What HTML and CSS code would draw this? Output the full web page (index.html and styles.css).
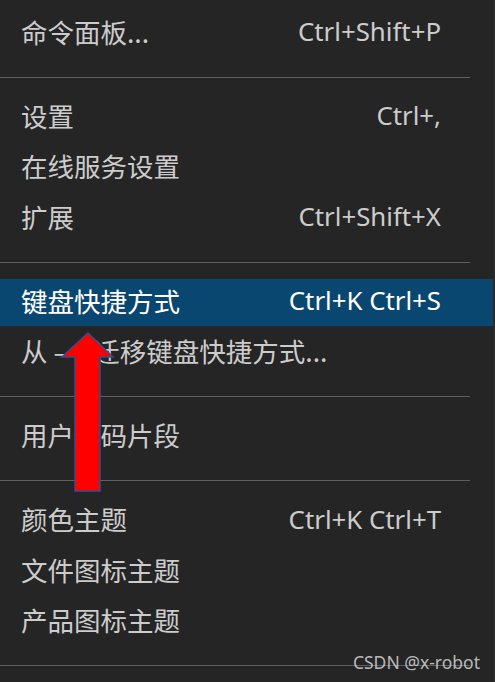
FILE: index.html
```html
<!DOCTYPE html>
<html lang="zh-CN">
<head>
<meta charset="utf-8">
<link rel="stylesheet" href="styles.css">
</head>
<body>
<div class="menu">
  <div class="group">
    <div class="item"><span class="label">命令面板...</span><span class="key">Ctrl+Shift+P</span></div>
  </div>
  <div class="sep"></div>
  <div class="group">
    <div class="item"><span class="label">设置</span><span class="key">Ctrl+,</span></div>
    <div class="item"><span class="label">在线服务设置</span></div>
    <div class="item"><span class="label">扩展</span><span class="key">Ctrl+Shift+X</span></div>
  </div>
  <div class="sep"></div>
  <div class="group">
    <div class="item active"><span class="label">键盘快捷方式</span><span class="key">Ctrl+K Ctrl+S</span></div>
    <div class="item"><span class="label">从 <span class="hidden-part">—</span> 迁移键盘快捷方式...</span></div>
  </div>
  <div class="sep"></div>
  <div class="group">
    <div class="item"><span class="label">用户代码片段</span></div>
  </div>
  <div class="sep"></div>
  <div class="group">
    <div class="item"><span class="label">颜色主题</span><span class="key">Ctrl+K Ctrl+T</span></div>
    <div class="item"><span class="label">文件图标主题</span></div>
    <div class="item"><span class="label">产品图标主题</span></div>
  </div>
  <div class="sep"></div>
</div>
<svg class="arrow" width="495" height="682" viewBox="0 0 495 682">
  <polygon points="88,333 113,357 100,357 100,491 75,491 75,357 62,357" fill="#ff0000" stroke="#2f528f" stroke-width="1.5" stroke-linejoin="miter"/>
</svg>
<div class="watermark">CSDN @x-robot</div>
</body>
</html>
```
FILE: styles.css
```css
html, body {
  margin: 0;
  padding: 0;
  background: #252526;
  width: 495px;
  height: 682px;
  overflow: hidden;
}
body {
  position: relative;
  font-family: "Noto Sans", "Noto Sans CJK SC", sans-serif;
  color: #cccccc;
}
.menu {
  width: 495px;
  height: 682px;
  padding-top: 9.5px;
  box-sizing: border-box;
  display: flex;
  flex-direction: column;
  border-right: 2px solid #2b2b2c;
}
.group {
  display: flex;
  flex-direction: column;
  gap: 3.5px;
}
.item {
  height: 47px;
  box-sizing: border-box;
  display: flex;
  align-items: center;
  justify-content: space-between;
  padding: 0 52px 4px 21px;
  font-size: 26.5px;
  white-space: nowrap;
}
.label {
  font-family: "Noto Sans CJK SC", sans-serif;
}
.key {
  font-family: "Noto Sans", "Open Sans", sans-serif;
  font-size: 25.8px;
}
.item.active {
  background: #094771;
  color: #ffffff;
}
.hidden-part {
  display: inline-block;
  width: 34px;
}
.sep {
  width: 470px;
  height: 1px;
  background: #5f5f5f;
  margin: 20px 0 16px;
  flex: none;
}
.arrow {
  position: absolute;
  left: 0;
  top: 0;
}
.watermark {
  position: absolute;
  right: 15px;
  top: 651px;
  font-family: "Noto Sans", sans-serif;
  font-size: 17.5px;
  color: rgba(205, 205, 205, 0.9);
  line-height: 22px;
}
```
